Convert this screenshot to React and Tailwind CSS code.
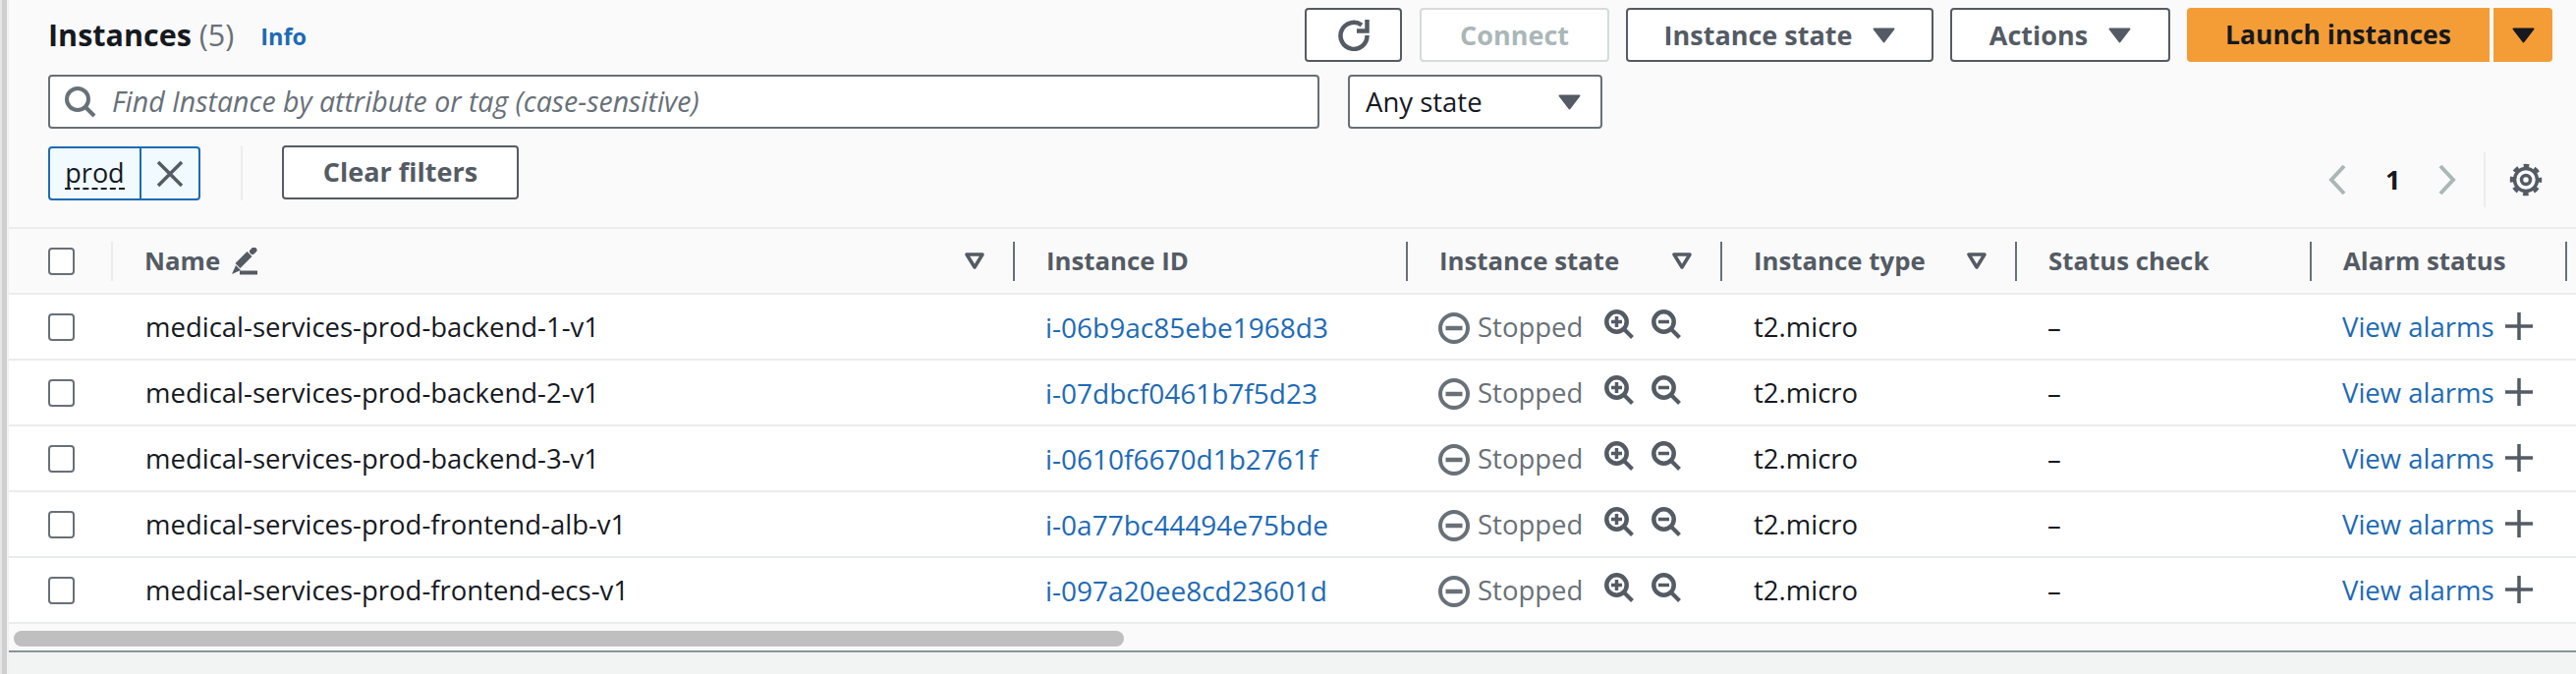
import React from 'react';

const font = "font-['Open_Sans','Liberation_Sans',sans-serif]";

const rows = [
  { name: 'medical-services-prod-backend-1-v1', id: 'i-06b9ac85ebe1968d3' },
  { name: 'medical-services-prod-backend-2-v1', id: 'i-07dbcf0461b7f5d23' },
  { name: 'medical-services-prod-backend-3-v1', id: 'i-0610f6670d1b2761f' },
  { name: 'medical-services-prod-frontend-alb-v1', id: 'i-0a77bc44494e75bde' },
  { name: 'medical-services-prod-frontend-ecs-v1', id: 'i-097a20ee8cd23601d' },
];

const gridCols = 'grid grid-cols-[106px_916px_400px_320px_300px_300px_260px_11px]';

// small solid caret used in the dropdown buttons
const Caret = ({ color = '#545b64', className = '' }) => (
  <svg width="23" height="16" viewBox="0 0 23 16" className={className}>
    <path d="M1.5 1.5h20L11.5 14.5z" fill={color} stroke={color} strokeWidth="2" strokeLinejoin="round" />
  </svg>
);

const FilterCaret = ({ className = '' }) => (
  <svg width="20" height="17" viewBox="0 0 20 17" className={className}>
    <path d="M2 2h16L10 15z" fill="none" stroke="#545b64" strokeWidth="3.5" strokeLinejoin="round" />
  </svg>
);

const Checkbox = () => (
  <div className="w-[27px] h-[28px] rounded-[4px] border-2 border-[#687078] bg-white" />
);

const ZoomIcon = ({ plus }) => (
  <svg width="30" height="30" viewBox="0 0 30 30" fill="none" stroke="#545b64" strokeWidth="4.5">
    <circle cx="12.5" cy="12.5" r="10.2" />
    <path d="M20 20l8.5 8.5" strokeWidth="4" />
    <path d="M7 12.5h11" strokeWidth="3.5" />
    {plus && <path d="M12.5 7v11" strokeWidth="3.5" />}
  </svg>
);

const Divider = ({ className = 'bg-[#687078]' }) => (
  <div className={`w-[2px] h-[40px] shrink-0 ${className}`} />
);

const HeaderCell = ({ label, filter, pencil, divider = true }) => (
  <div className="flex items-center h-full">
    {divider && <Divider />}
    <div className="flex flex-1 items-center pl-[32px] pr-[29px]">
      <span className="text-[25.8px] font-bold text-[#545b64]">{label}</span>
      {pencil && (
        <svg width="28" height="28" viewBox="0 0 28 28" className="ml-[10px]">
          <path d="M6 18l5 5-9 4z" fill="#545b64" />
          <path d="M8 18.5L20 6.5" stroke="#545b64" strokeWidth="7" />
          <path d="M23 4l1.5-1.5" stroke="#545b64" strokeWidth="6" strokeLinecap="round" />
          <path d="M10 25.5h18" stroke="#545b64" strokeWidth="4" />
        </svg>
      )}
      {filter && <FilterCaret className="ml-auto" />}
    </div>
  </div>
);

const Row = ({ row }) => (
  <div className={`${gridCols} h-[67px] bg-white border-b-2 border-[#eaeded] text-[27.5px] text-[#16191f]`}>
    <div className="flex items-center pl-[40px]">
      <Checkbox />
    </div>
    <div className="flex items-center pl-[33px]">{row.name}</div>
    <div className="flex items-center pl-[33px] text-[28px] text-[#1d6ab5]">{row.id}</div>
    <div className="flex items-center pl-[33px]">
      <svg width="32" height="32" viewBox="0 0 32 32" fill="none" stroke="#687078" strokeWidth="4" className="mt-[2px]">
        <circle cx="16" cy="16" r="14" />
        <path d="M7.5 16h17" strokeWidth="4.5" />
      </svg>
      <span className="ml-[8px] text-[#687078]">Stopped</span>
      <div className="ml-[22px] mb-[6px]">
        <ZoomIcon plus />
      </div>
      <div className="ml-[18px] mb-[6px]">
        <ZoomIcon />
      </div>
    </div>
    <div className="flex items-center pl-[34px]">t2.micro</div>
    <div className="flex items-center pl-[33px]">–</div>
    <div className="flex items-center pl-[33px] text-[#1d6ab5]">
      View alarms
      <svg width="28" height="28" viewBox="0 0 28 28" className="ml-[11px] mt-[-2px]">
        <path d="M0 14h28M14 0v28" stroke="#545b64" strokeWidth="3.5" />
      </svg>
    </div>
    <div />
  </div>
);

export default function App() {
  return (
    <div className={`w-[2622px] h-[686px] overflow-hidden flex bg-[#f2f3f3] ${font}`}>
      <div className="w-[9px] shrink-0 bg-[#cfcfcf] border-l-2 border-r-2 border-r-[#f0f0f0] border-l-[#e6e6e6]" />
      <div className="flex-1 flex flex-col min-w-0">
        {/* Toolbar */}
        <div className="h-[233px] bg-[#fafafa] border-b-2 border-[#eaeded] pl-[40px] pr-[24px] pt-[8px]">
          <div className="flex items-center h-[55px]">
            <h1 className="text-[30.5px] leading-none font-bold text-[#16191f]">
              Instances <span className="font-normal text-[#687078]">(5)</span>
            </h1>
            <span className="ml-[27px] mt-[4px] text-[23.5px] font-bold text-[#1d6ab5]">Info</span>
            <button className="ml-auto w-[99px] h-[55px] flex items-center justify-center bg-white border-2 border-[#545b64] rounded-[4px]">
              <svg width="32" height="32" viewBox="0 0 32 32" fill="none" stroke="#545b64" strokeWidth="4.5">
                <path d="M24 5.5A13.5 13.5 0 1 0 29.5 16" />
                <path d="M19 11.5h10.5V0" />
              </svg>
            </button>
            <button className="ml-[18px] w-[193px] h-[55px] pt-[1px] bg-white border-2 border-[#d5dbdb] rounded-[4px] text-[27px] font-bold text-[#aab7b8]">
              Connect
            </button>
            <button className="ml-[17px] w-[313px] h-[55px] pt-[1px] flex items-center justify-center gap-[21px] bg-white border-2 border-[#545b64] rounded-[4px] text-[27px] font-bold text-[#545b64]">
              Instance state <Caret />
            </button>
            <button className="ml-[17px] w-[224px] h-[55px] pt-[1px] flex items-center justify-center gap-[21px] bg-white border-2 border-[#545b64] rounded-[4px] text-[27px] font-bold text-[#545b64]">
              Actions <Caret />
            </button>
            <div className="ml-[17px] flex h-[55px] gap-[4px]">
              <button className="w-[308px] pt-[1px] rounded-l-[4px] bg-[#f49d37] text-[26.5px] font-bold text-[#16191f]">
                Launch instances
              </button>
              <button className="w-[60px] rounded-r-[4px] bg-[#f49d37] flex items-center justify-center">
                <Caret color="#16191f" />
              </button>
            </div>
          </div>

          <div className="flex items-center mt-[13px] h-[55px]">
            <div className="w-[1294px] h-[55px] flex items-center bg-white border-2 border-[#687078] rounded-[4px] pl-[15px]">
              <svg width="32" height="32" viewBox="0 0 32 32" fill="none" stroke="#687078" strokeWidth="4">
                <circle cx="13" cy="13" r="11" />
                <path d="M21 21l9 9" />
              </svg>
              <span className="ml-[16px] text-[28.5px] italic text-[#687078]">Find Instance by attribute or tag (case-sensitive)</span>
            </div>
            <div className="ml-[29px] w-[259px] h-[55px] flex items-center justify-between bg-white border-2 border-[#687078] rounded-[4px] pl-[16px] pr-[20px] text-[27.5px] text-[#16191f]">
              Any state <Caret />
            </div>
          </div>

          <div className="flex items-start mt-[17px]">
            <div className="flex w-[155px] h-[55px] border-2 border-[#1d6ab5] rounded-[4px] bg-[#f1faff] mt-[1px]">
              <div className="w-[93px] flex items-center justify-center border-r-2 border-[#1d6ab5] text-[27px] text-[#16191f]">
                <span className="border-b-2 border-dashed border-[#16191f] leading-[30px]">prod</span>
              </div>
              <div className="flex-1 flex items-center justify-center">
                <svg width="28" height="28" viewBox="0 0 28 28">
                  <path d="M2 2l24 24M26 2L2 26" stroke="#545b64" strokeWidth="3.5" />
                </svg>
              </div>
            </div>
            <div className="ml-[41px] w-[2px] h-[56px] bg-[#eaeded]" />
            <button className="ml-[40px] w-[241px] h-[55px] bg-white border-2 border-[#545b64] rounded-[4px] text-[27px] font-bold text-[#545b64]">
              Clear filters
            </button>
            <div className="ml-auto mr-[10px] flex items-center h-[56px] mt-[7px]">
              <svg width="18" height="32" viewBox="0 0 18 32" fill="none" stroke="#aab7b8" strokeWidth="4">
                <path d="M16 2L3 16l13 14" />
              </svg>
              <span className="w-[30px] ml-[40px] text-[27px] font-bold text-[#16191f]">1</span>
              <svg width="18" height="32" viewBox="0 0 18 32" fill="none" stroke="#aab7b8" strokeWidth="4" className="ml-[24px]">
                <path d="M2 2l13 14L2 30" />
              </svg>
              <div className="ml-[28px] w-[2px] h-[56px] bg-[#eaeded]" />
              <svg width="34" height="34" viewBox="0 0 34 34" fill="none" stroke="#545b64" className="ml-[24px]">
                <circle cx="17" cy="17" r="11.5" strokeWidth="3.5" />
                <circle cx="17" cy="17" r="14" strokeWidth="4.5" strokeDasharray="5.5 5.5" strokeDashoffset="2.75" />
                <circle cx="17" cy="17" r="4.5" strokeWidth="3.5" />
              </svg>
            </div>
          </div>
        </div>

        {/* Table header */}
        <div className={`${gridCols} h-[67px] bg-[#fafafa] border-b-2 border-[#eaeded]`}>
          <div className="flex items-center pl-[40px] justify-between">
            <Checkbox />
            <Divider className="bg-[#eaeded]" />
          </div>
          <HeaderCell label="Name" pencil filter divider={false} />
          <HeaderCell label="Instance ID" />
          <HeaderCell label="Instance state" filter />
          <HeaderCell label="Instance type" filter />
          <HeaderCell label="Status check" />
          <HeaderCell label="Alarm status" />
          <div className="flex items-center h-full">
            <Divider />
          </div>
        </div>

        {rows.map((row) => (
          <Row key={row.id} row={row} />
        ))}

        {/* Horizontal scrollbar */}
        <div className="h-[29px] bg-[#fafafa] pl-[5px] pt-[7px] border-b-2 border-[#879596]">
          <div className="w-[1130px] h-[16px] rounded-full bg-[#bfbfbf]" />
        </div>
      </div>
    </div>
  );
}
